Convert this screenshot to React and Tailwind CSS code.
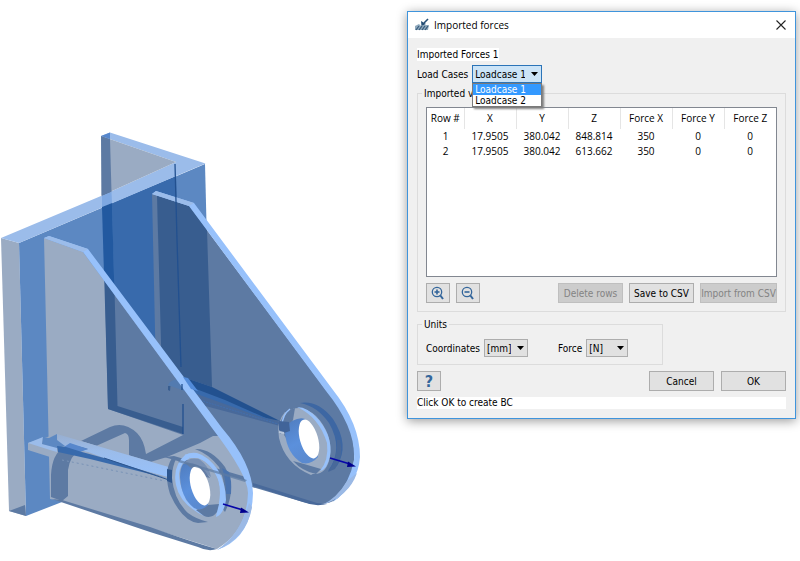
import React, { useState } from 'react';
import clsx from 'clsx';

const rows = [
  { id: 1, values: ['17.9505', '380.042', '848.814', '350', '0', '0'] },
  { id: 2, values: ['17.9505', '380.042', '613.662', '350', '0', '0'] }
];

const columns = ['Row #', 'X', 'Y', 'Z', 'Force X', 'Force Y', 'Force Z'];

function FrontLug() {
  return (
    <g>
      <path d="M172 458 Q163 472 170 494 Q182 521 198 523 L208 522 Q196 519 188 513 Q174 500 172 478 Q172 466 177 457Z" fill="#5d7aa3" />
      <path d="M195 449 Q211 448 225 467 Q237 488 225 512 L222 508 Q228 488 219 467 Q209 454 195 449Z" fill="#5d7aa3" />
      <path d="M222 468 L229 472 Q232 480 231 494 L226 494 Q226 478 222 468Z" fill="#4a73ae" />
      <path d="M185 455 Q190 452 197 453 Q208 456 218 470 Q226 484 226 500 Q224 514 216 517 L217 510 Q222 494 218 480 Q209 461 197 458 L190 458Z" fill="#97c1fb" />
      <path d="M186 454 Q172 466 176 485 Q180 505 206 517 L196 508 Q180 496 179 474 Q180 463 190 458Z" fill="#97c1fb" />
      <path d="M197 458 Q212 463 218 480 Q222 495 217 510 Q213 518 206 517 L186 500 L182 470 Q186 459 197 458Z" fill="#9aabc3" />
      <path d="M184 463 Q189 457 199 459 Q209 466 211 477 L201 470 L190 466Z" fill="#7890b4" />
      <path d="M196 510 L208 505 L219 504 L217 512 Q212 519 204 516Z" fill="#5d7aa3" />
      <path d="M183 464 Q195 461 205 472 L208 505 Q201 512 194 508 Q181 498 180 477 Q180 469 183 464Z" fill="url(#bore)" />
      <path d="M187 463 Q200 463 208 478 Q212 492 208 503 L203 504 L194 468Z" fill="#9aabc3" />
      <path d="M185 463 Q198 462 205 471 L210 478 L201 476 L191 468Z" fill="#637da5" />
      <ellipse cx="200" cy="486" rx="9" ry="20" transform="rotate(-16 200 486)" fill="#fff" />
      <path d="M180 460 L247 480 L245 482 L222 475 L178 462Z" fill="#5d7aa3" opacity="0.700" />
    </g>
  );
}

function RearLug() {
  return (
    <g>
      <path d="M300 403 Q318 400 333 419 Q350 445 337 466 L328 471 Q344 449 329 423 Q317 406 300 403Z" fill="#3d67a3" />
      <path d="M340 440 Q344 456 335 469 L328 472 Q338 458 337 440Z" fill="#48699a" />
      <path d="M285 412 Q276 422 279 438 Q285 464 311 475 L318 471 L300 458 L284 435 L290 415Z" fill="#9aabc3" />
      <path d="M290 410 Q302 404 316 416 Q333 434 330 456 Q327 475 313 474 L304 464 L290 420Z" fill="#9aabc3" />
      <path d="M297 407 Q308 407 319 420 Q333 438 330 456 Q327 470 320 471 Q329 460 327 443 Q319 417 297 407Z" fill="#97c1fb" />
      <path d="M289 410 L295 408 L293 420 L287 430 L280 434 Q278 424 283 417Z" fill="#5d7aa3" />
      <path d="M282 426 Q282 415 290 409" stroke="#97c1fb" strokeWidth="1.500" fill="none" />
      <path d="M293 461 L304 464 L321 469 L316 474 Q302 471 293 461Z" fill="#5d7aa3" />
      <path d="M292 421 Q300 417 305 419 L318 457 Q311 465 302 463 Q287 454 285 433 Q286 425 292 421Z" fill="url(#bore)" />
      <path d="M279 421 L289 422 L290 431 L284 433 L279 430Z" fill="#416499" />
      <path d="M279 432 L284 433" stroke="#b8c7dc" strokeWidth="2" />
      <ellipse cx="309" cy="439" rx="9" ry="20" transform="rotate(-16 309 439)" fill="#fff" />
    </g>
  );
}

function ForceArrow({ x, y }) {
  return (
    <g transform={`translate(${x} ${y})`}>
      <path d="M0 0 L20 6" stroke="#0606a8" strokeWidth="1.800" />
      <path d="M18 3.400 L26 8.400 L17 9Z" fill="#00008f" />
    </g>
  );
}

function BracketView() {
  return (
    <svg viewBox="0 0 407 561" className="block w-full" role="img" aria-label="Bracket model">
      <defs>
        <linearGradient id="bore" x1="0" y1="0" x2="0.4" y2="1">
          <stop offset="0" stopColor="#4f7cbe" />
          <stop offset="0.6" stopColor="#5b90dc" />
          <stop offset="1" stopColor="#5a8ad0" />
        </linearGradient>
        <linearGradient id="bar" x1="0" y1="0" x2="0" y2="1">
          <stop offset="0" stopColor="#97aed0" />
          <stop offset="0.4" stopColor="#9bbcea" />
          <stop offset="1" stopColor="#97c1fb" />
        </linearGradient>
        <clipPath id="frontFace">
          <path d="M44 238 L83 252 L212 427 Q250 475 249 493 Q248 530 217 549 L150 528 L62 501 L50 499Z" />
        </clipPath>
      </defs>

      {/* back plate */}
      <path d="M1 238 L19 243 L26 516 L9 511Z" fill="#9aabc3" />
      <path d="M9 511 L25 505 L26 516Z" fill="#5d7aa3" />
      <path d="M19 243 L205 164 L212 440 L62 502 L26 516Z" fill="#5c88c2" />
      <path d="M112 203 L176 176 L183 434 L117 406Z" fill="#386aac" />
      <path d="M1 238 L101 196 L176 162 L101 136 L110 132.500 L205.500 163.500 L19 243Z" fill="#9bbcea" />

      {/* upright wing */}
      <path d="M101 136 L176 162 L101 196Z" fill="#9aabc3" />
      <path d="M101 136 L110 139 L111.500 192 L102 196Z" fill="#5d7aa3" />
      <path d="M101 136 L110 132.500 L110 139Z" fill="#5787cc" />
      <path d="M102 196 L111.500 192 L112 203 L102 207Z" fill="#7ea8e2" />
      <path d="M102 207 L112 203 L117.500 406 L108 409Z" fill="#2259a0" />

      {/* rear rib */}
      <path d="M152 194 L157 195 L162 420 L157 420Z" fill="#5d7aa3" />
      <path d="M157 195 L189 206 L326 390 Q352 420 354 448 Q356 480 338 498 Q325 508 303 502 L160 460Z" fill="#5d7aa3" />
      <path d="M157 195 L189 206 L207 230 L212 387 L183 377 L162 380Z" fill="#385d8f" />
      <path d="M152 194 L156 191 L194 203 L333 390 Q360 424 360 457 Q358 484 333 502 Q350 482 354 460 Q356 428 326 391 L189 206Z" fill="#97c1fb" />
      <path d="M152 194 L156 191 L194 203 L189 206Z" fill="#9bbcea" />
      <path d="M347 481 L357 473 Q349 496 322 505 Q337 498 347 481Z" fill="#9bb9e5" />
      <path d="M253 486 L303 502 Q315 507 327 504 L317 503 L253 483Z" fill="#48699a" />

      {/* rear bar */}
      <path d="M183 382 L212 391 L262 413 L280 422 L280 426 L183 400Z" fill="#48699a" />
      <path d="M183 377 L212 387 L280 421 L262 417 L183 384Z" fill="#22518f" />
      <path d="M183 384 L225 400 L275 422 L183 389Z" fill="#386aac" />
      <path d="M183 395 L278 424" stroke="#426fae" strokeWidth="1" strokeDasharray="2 1" fill="none" />
      <RearLug />

      {/* front rib */}
      <path d="M44 238 L83 252 L212 427 Q250 475 249 493 Q248 530 217 549 L150 528 L62 501 L50 499Z" fill="#9aabc3" />
      <g clipPath="url(#frontFace)">
        <path d="M104 250 L190 250 L235 436 L213 436 L200 443 L167 457 L147 463 Q134 462 129 455 L129 440 Q129 434 125 433 L96 446 L81 441 L110 427 Q124 421 137 433 Q144 440 146 454 L183 435 L108 409Z" fill="#5d7aa3" />
        <path d="M104 270 L114 270 L117.500 406 L183 427 L183 434 L108 409Z" fill="#385d8f" />
        <path d="M103 240 L113.500 240 L114 294 L104 281Z" fill="#2259a0" />
        <path d="M168 385 Q170 380 178 379 L192 384 L200 397 L182 390Z" fill="#537bb0" />
        <path d="M168 386 L170.500 386 L170 391 L168 390Z" fill="#385d8f" />
        <path d="M164 457 L174 456 L246 477 L247 481Z" fill="#5d7aa3" />
      </g>
      <path d="M44 238 L49 236 L88 249 L222 428 Q252 463 253 493 Q252 538 217 550 Q247 530 248 493 Q248 475 212 428 L83 252Z" fill="#97c1fb" />
      <path d="M44 238 L49 236 L88 249 L83 252Z" fill="#9bbcea" />
      <path d="M249 503 L252 507 Q247 537 217 550 Q239 536 249 503Z" fill="#9bb9e5" />
      <path d="M52 499 L62 500 L150 527 Q192 542 217 549 Q208 552 198 547 L150 532Z" fill="#5d7aa3" />
      <path d="M175 164 L177 240 L181 367 M182 384 L182 390 M183 404 L183 434" stroke="#22508f" strokeWidth="1.300" fill="none" />
      <path d="M183 377 L188 378 L198 391 L191 389Z" fill="#528bd9" />

      {/* front bar */}
      <path d="M28 443 L57 434 L172 468 L170 481 L160 480 L50 457 L28 450Z" fill="#9aabc3" />
      <path d="M28 443 L43 437 L42 444 L57 446 L57 452 L50 450Z" fill="#9bbcea" />
      <path d="M57 434 L172 468 L168 477 L120 464 L88 452 L58 445Z" fill="url(#bar)" />
      <path d="M43 437 L49 438 L57 434 L57 440 L65 446 L57 448 L42 444Z" fill="#5c88c2" />
      <path d="M88 449 Q72 443 64 447 Q52 454 51 475 L51 497 L62 501 L68 496 L68 470 Q70 455 80 451Z" fill="#5d7aa3" />
      <path d="M70 443 L88 449 L80 452 L64 447Z" fill="#5787cc" />
      <path d="M57 446 L66 447 L82 452 L104 458 L166 478 L90 459 L58 452Z" fill="#386aac" />
      <path d="M104 458 L169 480" stroke="#2d568f" strokeWidth="1" />
      <path d="M62 460 L165 481" stroke="#7892b6" strokeWidth="1" strokeDasharray="2 3" />
      <FrontLug />
      <path d="M167 469 L172 470 L172 483 L167 481Z" fill="#2d568f" />
      <ForceArrow x={223} y={504} />
      <ForceArrow x={330} y={458} />
    </svg>
  );
}

function ForcesIcon() {
  return (
    <svg width="15" height="14" viewBox="0 0 15 14" aria-hidden="true">
      <path d="M0 8 L4 6 L6 8 L9 7 L14 7 L13 12 L0 12Z" fill="#8fa9bd" />
      <path d="M1 12 L4 8 M4 12 L7 8 M7 12 L10 8 M10 12 L13 8" stroke="#36597a" strokeWidth="1.200" />
      <path d="M13 1 L9 5" stroke="#244e75" strokeWidth="1.600" />
      <path d="M6 3 L6.500 8 L11 6Z" fill="#244e75" />
    </svg>
  );
}

function ZoomIcon({ plus }) {
  return (
    <svg width="14" height="14" viewBox="0 0 14 14" fill="none" stroke="#34669b" aria-hidden="true">
      <circle cx="6" cy="6" r="4.700" strokeWidth="1.300" />
      <path d="M3.500 6 H8.500" strokeWidth="1.600" />
      {plus && <path d="M6 3.500 V8.500" strokeWidth="1.600" />}
      <path d="M9 9 L12 13" strokeWidth="2" />
    </svg>
  );
}

function Combo({ id, label, options, value, onChange, open, className }) {
  return (
    <div className="flex items-center gap-1">
      <label htmlFor={id}>{label}</label>
      <div className={clsx('relative', className)}>
        <select
          id={id}
          value={value}
          onChange={event => onChange(event.target.value)}
          className={clsx(
            'block h-[18px] w-full appearance-none border pl-[2px] pr-4 outline-none',
            open ? 'border-[#2b74b8] bg-[#cce4f7]' : 'border-[#adadad] bg-[#e1e1e1]'
          )}
        >
          {options.map(option => <option key={option}>{option}</option>)}
        </select>
        <svg width="7" height="4" viewBox="0 0 7 4" className="pointer-events-none absolute right-1 top-[7px]" aria-hidden="true">
          <path d="M0 0 H7 L3.500 4Z" fill="#000" />
        </svg>
        {open && (
          <ul role="listbox" aria-label={label} className="absolute left-0 top-full z-10 w-full border border-[#7a7a7a] bg-white leading-[11px] shadow-[2px_2px_2px_#808080]">
            {options.map(option => (
              <li
                key={option}
                role="option"
                aria-selected={option === value}
                className={clsx('px-[2px]', option === value && 'bg-[#3399ff] text-white')}
              >{option}</li>
            ))}
          </ul>
        )}
      </div>
    </div>
  );
}

function Button({ className, ...props }) {
  return (
    <button
      type="button"
      className={clsx('flex h-5 items-center justify-center whitespace-nowrap border border-[#adadad] bg-[#e1e1e1] disabled:border-[#bfbfbf] disabled:bg-[#cccccc] disabled:text-[#838383]', className)}
      {...props}
    />
  );
}

function ImportedForces() {
  const [loadcase, setLoadcase] = useState('Loadcase 1');
  const [unit, setUnit] = useState('[mm]');
  const [force, setForce] = useState('[N]');

  return (
    <section role="dialog" aria-label="Imported forces" className="mr-1 mt-[11px] w-[389px] shrink-0 border border-[#3f94dc] bg-[#f0f0f0] font-['DejaVu_Sans_Condensed','DejaVu_Sans',sans-serif] text-[10px] leading-[13px] text-black shadow-[0_2px_10px_rgba(0,0,0,0.4)]">
      <header className="flex h-[26px] items-center gap-1 bg-white pl-[7px] pr-[9px] font-['Open_Sans',sans-serif]">
        <ForcesIcon />
        <h1 className="flex-1">Imported forces</h1>
        <button type="button" aria-label="Close">
          <svg width="10" height="10" viewBox="0 0 10 10" stroke="#222" strokeWidth="1.100">
            <path d="M0.500 0.500 L9.500 9.500 M9.500 0.500 L0.500 9.500" />
          </svg>
        </button>
      </header>

      <div className="px-[9px] pb-[9px] pt-[10px]">
        <p className="w-fit bg-white">Imported Forces 1</p>
        <div className="mt-1">
          <Combo id="loadcase" label="Load Cases" options={['Loadcase 1', 'Loadcase 2']} value={loadcase} onChange={setLoadcase} open className="w-[70px]" />
        </div>

        <fieldset className="mt-1 border border-[#dcdcdc] px-2 pb-2">
          <legend className="-ml-1 px-[2px]">Imported values</legend>
          <div className="mt-[7px] h-[170px] border border-[#828790] bg-white">
            <table className="w-full table-fixed border-collapse text-center font-['Open_Sans',sans-serif]">
              <thead>
                <tr className="h-[21px]">
                  {columns.map(column => (
                    <th key={column} className="border-r border-[#e5e5e5] p-0 font-normal first:w-[37px] last:border-r-0">{column}</th>
                  ))}
                </tr>
              </thead>
              <tbody>
                {rows.map(row => (
                  <tr key={row.id} className="h-[15px]">
                    <td className="p-0">{row.id}</td>
                    {row.values.map((value, i) => <td key={i} className="p-0">{value}</td>)}
                  </tr>
                ))}
              </tbody>
            </table>
          </div>
          <div className="mt-[6px] flex gap-[6px]">
            <Button className="w-6" aria-label="Zoom in"><ZoomIcon plus /></Button>
            <Button className="w-6" aria-label="Zoom out"><ZoomIcon /></Button>
            <Button className="ml-auto w-[65px]" disabled>Delete rows</Button>
            <Button className="w-[65px]">Save to CSV</Button>
            <Button className="w-[77px]" disabled>Import from CSV</Button>
          </div>
        </fieldset>

        <fieldset className="mt-[6px] flex w-2/3 border border-[#dcdcdc] px-2 pb-[7px] pt-2">
          <legend className="-ml-1 px-[2px]">Units</legend>
          <div className="flex gap-[30px]">
            <Combo id="coordinates" label="Coordinates" options={['[mm]', '[m]']} value={unit} onChange={setUnit} className="w-11" />
            <Combo id="force" label="Force" options={['[N]', '[kN]']} value={force} onChange={setForce} className="w-[42px]" />
          </div>
        </fieldset>

        <div className="mt-[6px] flex gap-[7px]">
          <Button className="w-6 text-[16px] font-bold text-[#34669b]" aria-label="Help">?</Button>
          <Button className="ml-auto w-[65px]">Cancel</Button>
          <Button className="w-[65px]">OK</Button>
        </div>
        <p role="status" className="mt-[6px] bg-white leading-[12px]">Click OK to create BC</p>
      </div>
    </section>
  );
}

export default function App() {
  return (
    <main className="flex min-h-screen items-start overflow-hidden bg-white">
      <div className="min-w-0 flex-1">
        <BracketView />
      </div>
      <ImportedForces />
    </main>
  );
}
